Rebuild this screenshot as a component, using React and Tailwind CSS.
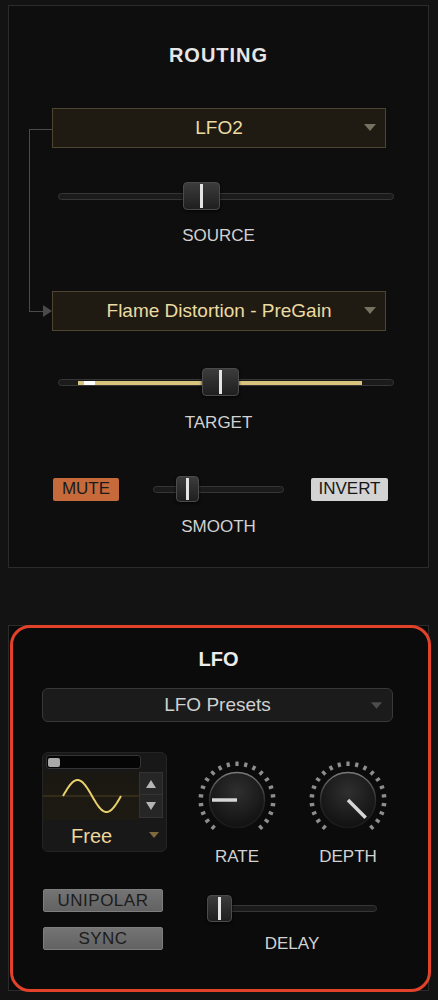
import React from 'react';

function Caret({ color = '#7a7566', w = 12, h = 7 }) {
  return (
    <svg width={w} height={h} viewBox="0 0 12 7">
      <polygon points="0,0 12,0 6,7" fill={color} />
    </svg>
  );
}

function Dropdown({ label, className }) {
  return (
    <div className={`relative flex items-center justify-center h-[40px] w-[334px] bg-[#1f1b12] border border-[#4d4531] ${className}`}>
      <span className="text-[19px] text-[#ecdba2]">{label}</span>
      <span className="absolute right-[9px] top-[15px]">
        <Caret color="#77715f" />
      </span>
    </div>
  );
}

function Thumb({ w, h }) {
  return (
    <div
      className="flex justify-center items-center rounded-[4px] border border-[#4b4b4b] bg-gradient-to-b from-[#3c3c3c] to-[#1f1f1f] shadow-[0_1px_3px_rgba(0,0,0,0.8)]"
      style={{ width: w, height: h }}
    >
      <div className="w-[3px] bg-[#e4e4e4]" style={{ height: h - 4 }} />
    </div>
  );
}

// track + thumb, thumb sits over the track
function Slider({ width, thumbLeft, thumbW, thumbH, fill, className = '' }) {
  return (
    <div className={`relative flex items-center ${className}`} style={{ width, height: thumbH }}>
      <div className="relative w-full h-[7px] rounded-full bg-[#1b1b1b] border border-[#363636]">
        {fill && (
          <>
            <div className="absolute top-[1px] h-[4px] bg-[#d8c47c]" style={{ left: fill.left, width: fill.width }} />
            <div className="absolute top-[1px] h-[4px] bg-white" style={{ left: fill.white, width: 11 }} />
          </>
        )}
      </div>
      <div className="absolute top-0" style={{ left: thumbLeft }}>
        <Thumb w={thumbW} h={thumbH} />
      </div>
    </div>
  );
}

function Knob({ id, angle }) {
  const ticks = [];
  const n = 21;
  for (let i = 0; i < n; i++) {
    const a = ((-139 + (278 * i) / (n - 1)) * Math.PI) / 180;
    ticks.push(
      <line
        key={i}
        x1={40 + 34 * Math.sin(a)}
        y1={40 - 34 * Math.cos(a)}
        x2={40 + 38.5 * Math.sin(a)}
        y2={40 - 38.5 * Math.cos(a)}
        stroke="#8e8e8e"
        strokeWidth="3.2"
      />
    );
  }
  const r = (angle * Math.PI) / 180;
  return (
    <svg width="80" height="80" viewBox="0 0 80 80">
      <defs>
        <radialGradient id={`${id}-body`} cx="50%" cy="35%" r="65%">
          <stop offset="0%" stopColor="#2f2f2f" />
          <stop offset="100%" stopColor="#111" />
        </radialGradient>
        <linearGradient id={`${id}-rim`} x1="0" y1="0" x2="0" y2="1">
          <stop offset="0%" stopColor="#7a7a7a" />
          <stop offset="55%" stopColor="#262626" />
          <stop offset="100%" stopColor="#1a1a1a" />
        </linearGradient>
      </defs>
      {ticks}
      <circle cx="40" cy="40" r="27.5" fill={`url(#${id}-body)`} stroke={`url(#${id}-rim)`} strokeWidth="1.5" />
      <line
        x1="40"
        y1="40"
        x2={40 + 25 * Math.sin(r)}
        y2={40 - 25 * Math.cos(r)}
        stroke="#d6d6d6"
        strokeWidth="3.5"
      />
    </svg>
  );
}

function WaveBox() {
  const pts = [];
  for (let i = 0; i <= 58; i++) {
    pts.push(`${20 + i},${24 - 16 * Math.sin((i / 58) * Math.PI * 2)}`);
  }
  return (
    <div className="w-[125px] h-[100px] rounded-[6px] bg-[#181818] border border-[#242424] flex flex-col">
      <div className="mt-[2px] ml-[3px] w-[95px] h-[14px] rounded-[3px] bg-[#050505] border border-[#343434] flex items-center pl-[1px]">
        <div className="w-[12px] h-[9px] rounded-[2px] bg-[#a9a9a9]" />
      </div>
      <div className="mt-[3px] flex">
        <div className="w-[96px] h-[48px] bg-gradient-to-b from-[#1a1812] to-[#1d1a12]">
          <svg width="96" height="48" viewBox="0 0 96 48">
            <line x1="0" y1="24" x2="96" y2="24" stroke="#4c4120" strokeWidth="1" />
            <polyline points={pts.join(' ')} fill="none" stroke="#e9d06c" strokeWidth="2" />
          </svg>
        </div>
        <div className="flex flex-col">
          <div className="w-[24px] h-[23px] bg-[#262626] border border-[#333] flex items-center justify-center">
            <svg width="10" height="8" viewBox="0 0 10 8"><polygon points="5,0 10,8 0,8" fill="#b5b5b5" /></svg>
          </div>
          <div className="w-[24px] h-[23px] bg-[#262626] border border-[#333] border-t-0 flex items-center justify-center">
            <svg width="10" height="8" viewBox="0 0 10 8"><polygon points="0,0 10,0 5,8" fill="#b5b5b5" /></svg>
          </div>
        </div>
      </div>
      <div className="relative flex-1 flex items-center">
        <span className="ml-[28px] text-[20px] text-[#eed79c]">Free</span>
        <span className="absolute left-[106px] top-[12px]">
          <Caret color="#7e6a3c" w={10} h={6} />
        </span>
      </div>
    </div>
  );
}

function Label({ children, className = '' }) {
  return <div className={`text-[17px] leading-[20px] text-[#d2d2d2] text-center ${className}`}>{children}</div>;
}

export default function App() {
  return (
    <div className="w-[438px] h-[1000px] bg-[#131313] font-['Liberation_Sans',Arial,sans-serif] pt-[5px] overflow-hidden">
      {/* Routing */}
      <div className="relative ml-[8px] w-[421px] h-[563px] border border-[#2b2b2b] bg-[#0e0e0e] flex flex-col">
        {/* connector between source and target */}
        <div className="absolute left-[20px] top-[123px] w-[23px] h-[182px] border-l border-t border-[#4a4a4a]" />
        <div className="absolute left-[20px] top-[305px] w-[15px] border-t border-[#4a4a4a]" />
        <svg className="absolute left-[34px] top-[299px]" width="9" height="12" viewBox="0 0 9 12">
          <polygon points="0,0 9,6 0,12" fill="#4a4a4a" />
        </svg>

        <div className="mt-[38px] text-center text-[20px] leading-[22px] font-bold tracking-[1px] text-[#e6e6e6]">ROUTING</div>
        <Dropdown label="LFO2" className="mt-[42px] ml-[43px]" />
        <Slider className="mt-[34px] ml-[49px]" width={336} thumbLeft={125} thumbW={37} thumbH={28} />
        <Label className="mt-[16px]">SOURCE</Label>
        <Dropdown label="Flame Distortion - PreGain" className="mt-[45px] ml-[43px]" />
        <Slider
          className="mt-[37px] ml-[49px]"
          width={336}
          thumbLeft={144}
          thumbW={37}
          thumbH={28}
          fill={{ left: 19, width: 284, white: 25 }}
        />
        <Label className="mt-[17px]">TARGET</Label>
        <div className="mt-[43px] flex items-center h-[26px]">
          <div className="ml-[44px] w-[66px] h-[23px] rounded-[2px] bg-[#c76a3b] flex items-center justify-center text-[17px] text-[#1a1a1a]">
            MUTE
          </div>
          <Slider className="ml-[34px]" width={131} thumbLeft={23} thumbW={23} thumbH={26} />
          <div className="ml-[27px] w-[77px] h-[23px] rounded-[2px] bg-[#d3d3d3] flex items-center justify-center text-[17px] text-[#161616]">
            INVERT
          </div>
        </div>
        <Label className="mt-[15px]">SMOOTH</Label>
      </div>

      {/* LFO */}
      <div className="relative mt-[57px] ml-[8px] w-[421px] h-[366px] border border-[#2b2b2b] bg-[#0b0b0b] flex flex-col">
        <div className="absolute left-[1px] -top-[1px] w-[421px] h-[367px] rounded-[20px] border-[3px] border-[#e2412a] pointer-events-none" />

        <div className="mt-[23px] text-center text-[20px] leading-[20px] font-bold text-[#ececec]">LFO</div>
        <div className="relative mt-[19px] ml-[33px] w-[351px] h-[34px] rounded-[6px] bg-[#1b1b1b] border border-[#383838] flex items-center justify-center">
          <span className="text-[19px] text-[#d0d0d0]">LFO Presets</span>
          <span className="absolute right-[10px] top-[13px]">
            <Caret color="#4d4d4d" w={11} h={7} />
          </span>
        </div>

        <div className="mt-[30px] flex items-start">
          <div className="ml-[33px]">
            <WaveBox />
          </div>
          <div className="ml-[30px] flex flex-col items-center w-[80px]">
            <div className="mt-[8px]">
              <Knob id="rate" angle={-90} />
            </div>
            <Label className="mt-[7px]">RATE</Label>
          </div>
          <div className="ml-[31px] flex flex-col items-center w-[80px]">
            <div className="mt-[8px]">
              <Knob id="depth" angle={135} />
            </div>
            <Label className="mt-[7px]">DEPTH</Label>
          </div>
        </div>

        <div className="mt-[22px] flex items-start">
          <div className="ml-[34px] flex flex-col gap-[15px]">
            <div className="w-[120px] h-[23px] rounded-[2px] bg-gradient-to-b from-[#747474] to-[#626262] border border-[#7e7e7e] flex items-center justify-center text-[17px] tracking-[0.5px] text-[#1c1c1c]">
              UNIPOLAR
            </div>
            <div className="w-[120px] h-[23px] rounded-[2px] bg-gradient-to-b from-[#747474] to-[#626262] border border-[#7e7e7e] flex items-center justify-center text-[17px] tracking-[0.5px] text-[#1c1c1c]">
              SYNC
            </div>
          </div>
          <div className="ml-[44px] flex flex-col items-center">
            <Slider className="mt-[6px]" width={170} thumbLeft={0} thumbW={25} thumbH={27} />
            <Label className="mt-[12px]">DELAY</Label>
          </div>
        </div>
      </div>
    </div>
  );
}
